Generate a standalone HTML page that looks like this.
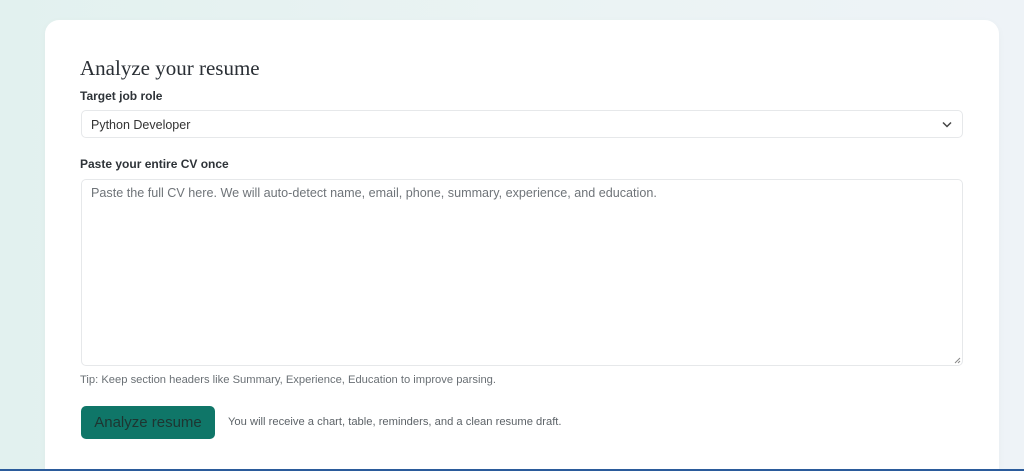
<!DOCTYPE html>
<html style="overflow:hidden;height:471px"><head><meta charset="utf-8"><style>
*{box-sizing:border-box;margin:0;padding:0}
body{width:1024px;height:471px;overflow:hidden;background:linear-gradient(90deg,#e2f1ef 0%,#eaf3f3 50%,#eef3f7 100%);font-family:"Liberation Sans",sans-serif;position:relative}
.card{position:absolute;left:45px;top:20px;width:954px;height:451px;background:#fff;border-radius:14px 14px 0 0;box-shadow:0 2px 8px rgba(0,0,0,.03)}
.bar{position:absolute;left:0;right:0;top:469px;height:2px;background:#2b5b9b}
h1{position:absolute;left:35px;top:36px;font-family:"Liberation Serif",serif;font-weight:normal;font-size:21px;color:#2a2f35}
.lbl{position:absolute;left:35px;font-size:12px;font-weight:bold;color:#2e3338}
.sel{position:absolute;left:36px;top:90px;width:882px;height:28px;border:1px solid #e6e8ea;border-radius:5px;font-size:12.5px;color:#333;padding:7px 0 0 9px}
.ta{position:absolute;left:36px;top:159px;width:882px;height:187px;border:1px solid #e6e8ea;border-radius:5px;font-size:12.6px;color:#6f7479;padding:6px 0 0 9px}
.tip{position:absolute;left:35px;top:354px;font-size:11.2px;color:#6a7075}
.btn{position:absolute;left:36px;top:386px;width:134px;height:33px;background:#0f7668;border-radius:5px;color:#1e3531;font-size:15px;text-align:center;line-height:33px}
.note{position:absolute;left:183px;top:396px;font-size:11.2px;color:#5d6368}
</style></head><body>
<div class="card">
<h1>Analyze your resume</h1>
<div class="lbl" style="top:69px">Target job role</div>
<div class="sel">Python Developer
<svg style="position:absolute;right:10px;top:10px" width="10" height="7" viewBox="0 0 10 7"><path d="M1 1.5L5 5.5L9 1.5" stroke="#444" stroke-width="1.5" fill="none"/></svg></div>
<div class="lbl" style="top:137px">Paste your entire CV once</div>
<div class="ta">Paste the full CV here. We will auto-detect name, email, phone, summary, experience, and education.
<svg style="position:absolute;right:1px;bottom:1px" width="7" height="7"><path d="M1 6L6 1M4 6L6 4" stroke="#888" stroke-width="1"/></svg></div>
<div class="tip">Tip: Keep section headers like Summary, Experience, Education to improve parsing.</div>
<div class="btn">Analyze resume</div>
<div class="note">You will receive a chart, table, reminders, and a clean resume draft.</div>
</div>
<div class="bar"></div>
</body></html>
